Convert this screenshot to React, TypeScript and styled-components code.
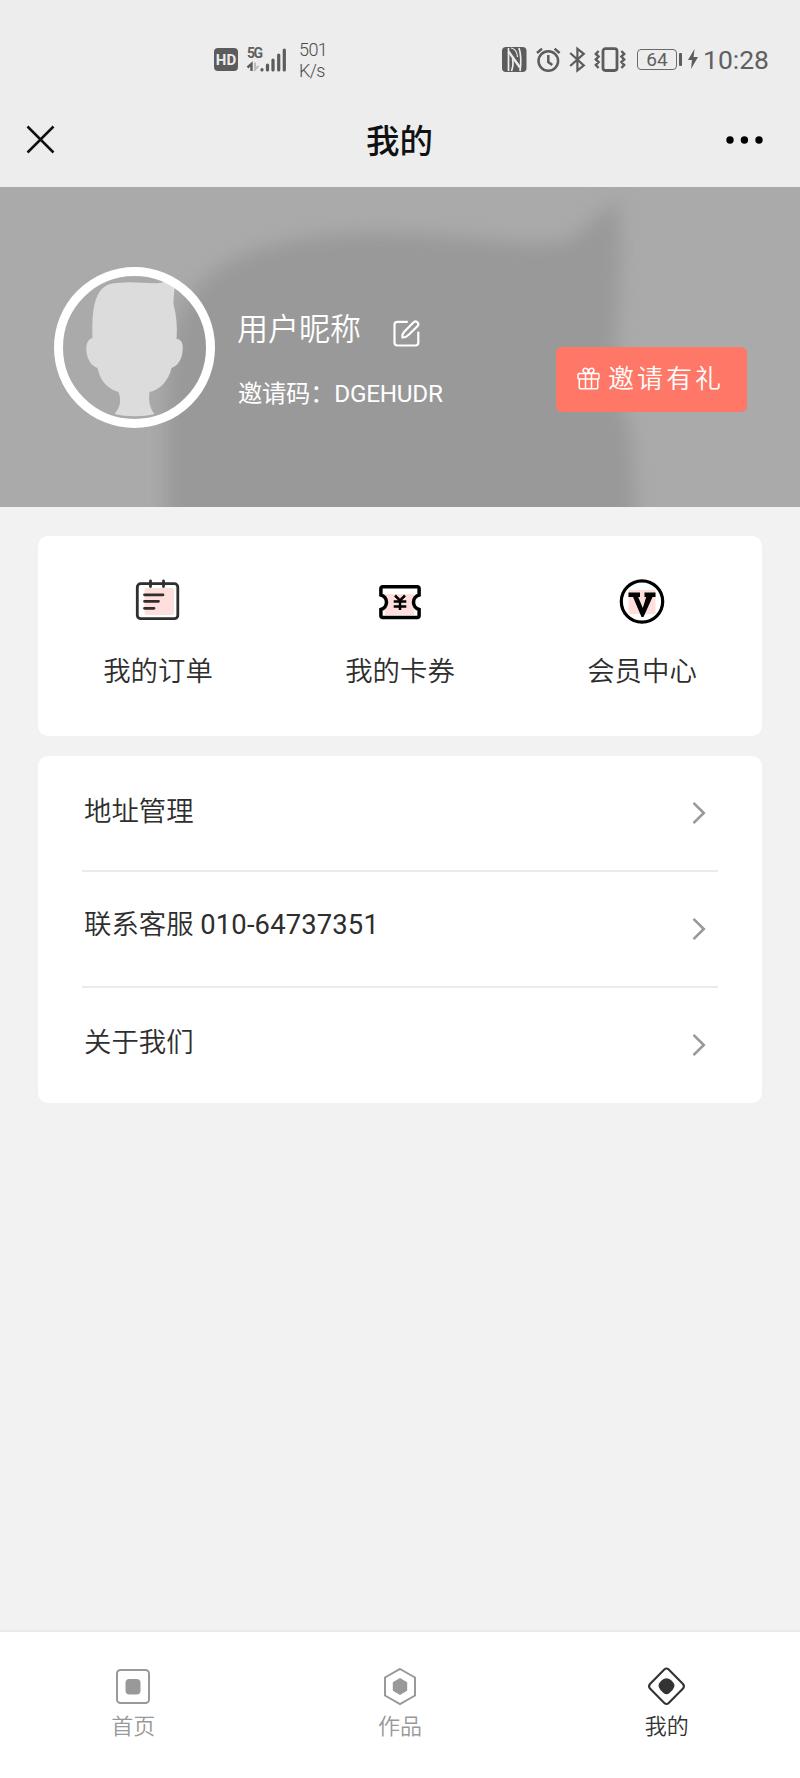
import React from "react";
import styled, { createGlobalStyle } from "styled-components";

const GlobalStyle = createGlobalStyle`
  * { box-sizing: border-box; }
  body {
    margin: 0;
    background: #f2f2f2;
    font-family: Roboto, "Noto Sans CJK SC", sans-serif;
    color: #2e2e2e;
  }
  svg { display: block; flex: none; overflow: visible; }
`;

const Page = styled.div`
  width: 800px;
  height: 1778px;
  display: flex;
  flex-direction: column;
  background: #f2f2f2;
  overflow: hidden;
`;

const StatusBar = styled.div`
  height: 93px;
  padding: 25px 31px 0 214px;
  background: #ededed;
  color: #606060;
  display: flex;
  justify-content: space-between;
  align-items: center;
`;

const StatusGroup = styled.div`
  display: flex;
  align-items: center;
`;

const HdBadge = styled.span`
  width: 24px;
  height: 23px;
  margin-right: 9px;
  border-radius: 4px;
  background: #5c5c5c;
  color: #ededed;
  font-size: 15px;
  font-weight: 700;
  line-height: 24px;
  text-align: center;
`;

const Signal = styled.div`
  display: flex;
  align-items: flex-end;
  width: 39px;
  height: 25px;
  margin-right: 13px;
`;

const Network = styled.div`
  width: 13px;
  height: 25px;
  font-size: 14px;
  font-weight: 700;
  line-height: 12px;
  letter-spacing: -1.5px;
`;

const Speed = styled.div`
  font-size: 18px;
  line-height: 21px;
  letter-spacing: -0.6px;
  font-weight: 300;
  color: #4c4c4c;
  padding-top: 1px;
`;

const Battery = styled.span`
  width: 40px;
  height: 21px;
  margin-left: 11px;
  border: 1.5px solid #6a6a6a;
  border-radius: 4px;
  font-size: 19px;
  font-weight: 400;
  line-height: 19px;
  text-align: center;
`;

const BatteryTip = styled.span`
  width: 3px;
  height: 13px;
  margin: 0 6px 0 2px;
  border-radius: 1px;
  background: #5c5c5c;
`;

const Clock = styled.span`
  margin-left: 5px;
  padding-top: 1px;
  font-size: 26.5px;
  font-weight: 400;
  line-height: 30px;
`;

const NavBar = styled.header`
  height: 94px;
  padding: 0 37px 1px 26px;
  background: #ededed;
  display: grid;
  grid-template-columns: 1fr auto 1fr;
  align-items: center;
  & > svg:last-child { justify-self: end; }
`;

const NavTitle = styled.h1`
  margin: 4px 0 0 10px;
  font-size: 33.5px;
  line-height: 40px;
  font-weight: 500;
  color: #111;
`;

const Hero = styled.section`
  position: relative;
  height: 320px;
  background: #aaa;
  overflow: hidden;
  display: flex;
`;

const Backdrop = styled.svg`
  position: absolute;
  inset: 0;
  filter: blur(9px);
`;

const HeroContent = styled.div`
  position: relative;
  width: 100%;
  display: flex;
  align-items: flex-start;
  padding: 80px 53px 0;
`;

const Identity = styled.div`
  margin-left: 21px;
  padding-top: 43px;
  color: #fff;
`;

const NameRow = styled.div`
  display: flex;
  align-items: center;
  gap: 32px;
  font-size: 31px;
  line-height: 40px;
  font-weight: 350;
  & > svg { margin-top: 7px; }
`;

const InviteCode = styled.div`
  margin-top: 29px;
  padding-left: 1px;
  font-size: 24.3px;
  line-height: 30px;
  letter-spacing: -0.25px;
`;

const InviteButton = styled.button`
  width: 191px;
  height: 65px;
  margin: 80px 0 0 auto;
  padding: 0 0 2px 21px;
  border: 0;
  border-radius: 6px;
  background: #ff7766;
  color: #fff;
  font: 350 26px/36px Roboto, "Noto Sans CJK SC", sans-serif;
  letter-spacing: 3px;
  display: flex;
  align-items: center;
  gap: 8px;
  white-space: nowrap;
`;

const Card = styled.section`
  margin: 0 38px;
  border-radius: 10px;
  background: #fff;
`;

const Services = styled(Card)`
  height: 200px;
  margin-top: 29px;
  display: grid;
  grid-template-columns: repeat(3, 242px);
  justify-content: center;
`;

const Service = styled.div`
  display: flex;
  flex-direction: column;
  align-items: center;
  padding-top: 42px;
  font-size: 27.4px;
  font-weight: 350;
  line-height: 40px;
  & > svg { margin-bottom: 30px; }
`;

const Menu = styled(Card)`
  margin-top: 20px;
  height: 347px;
  padding: 0 44px;
`;

const MenuRow = styled.div<{ $height: number; $lift: number }>`
  height: ${(p) => p.$height}px;
  padding: 0 13px 0 2px;
  display: flex;
  justify-content: space-between;
  align-items: center;
  font-size: 27.4px;
  font-weight: 350;
  line-height: 40px;
  & + & { border-top: 2px solid #ebebeb; }
  & > span { margin-bottom: ${(p) => p.$lift}px; }
`;

const Phone = styled.b`
  font-weight: 400;
  letter-spacing: 0.15px;
`;

const TabBar = styled.nav`
  height: 148px;
  margin-top: auto;
  border-top: 2px solid #e9e9e9;
  background: #fff;
  display: grid;
  grid-template-columns: repeat(3, 1fr);
`;

const Tab = styled.div<{ $active?: boolean }>`
  display: flex;
  flex-direction: column;
  align-items: center;
  padding-top: 34px;
  font-size: 22px;
  font-weight: 350;
  line-height: 30px;
  color: ${(p) => (p.$active ? "#333" : "#999")};
  & > svg { margin-bottom: 6px; }
`;

const Avatar = () => (
  <svg width="163" height="161" viewBox="0 0 162 161">
    <defs>
      <clipPath id="face"><circle cx="81" cy="80.5" r="73.5" /></clipPath>
    </defs>
    <path
      clipPath="url(#face)"
      fill="#dcdcdc"
      d="M39 71 C38 38 42 16 64 16 C80 14 94 17 106 16 C113 15 119 12 124 7 C121 19 120 30 120 37 C123 49 124 60 123 72 C129 72 130 79 129 85 C128 93 124 99 118 101 C115 114 106 123 96 125 C95 134 96 141 101 147 C90 150 73 150 61 147 C67 140 68 133 65 125 C55 122 47 115 44 101 C38 99 34 93 33 85 C32 78 34 72 39 71 Z"
    />
    <circle cx="81" cy="80.5" r="76" fill="none" stroke="#fff" strokeWidth="9" />
  </svg>
);

const NfcIcon = () => (
  <svg width="25" height="25" viewBox="0 0 25 25">
    <rect width="24.5" height="25" rx="4" fill="#5c5c5c" />
    <g fill="none" stroke="#ededed" strokeWidth="1.7">
      <path d="M6.500 1V24" />
      <path d="M6.500 4.500L18 20.500" strokeWidth="2.400" />
      <path d="M10.500 12C11.500 16 11 20 9.500 24" />
      <path d="M9 1C13 1.500 15 4 15.500 10" strokeWidth="1.200" />
      <path d="M18 24C19.200 16 19.200 8 17 1" />
    </g>
  </svg>
);

const AlarmIcon = styled.svg`
  margin-left: 9px;
`;

const BluetoothIcon = styled.svg`
  margin-left: 8px;
`;

const VibrateIcon = styled.svg`
  margin-left: 8px;
`;

const BoltIcon = () => (
  <svg width="10" height="20" viewBox="0 0 10 20" fill="#5c5c5c">
    <path d="M6.5 0L0 11h4L3 20l7-12H5.6z" />
  </svg>
);

const EditIcon = () => (
  <svg width="27" height="27" viewBox="0 0 27 27" fill="none" stroke="#fff" strokeWidth="2.2" strokeLinecap="round">
    <path d="M14 1.8H4.5A3 3 0 0 0 1.5 4.8V22.5a3 3 0 0 0 3 3H22.3a3 3 0 0 0 3-3V12.5" />
    <path d="M9.5 17.5c-.5-2 .2-4 2-6L20.4 2.500a2.700 2.700 0 0 1 4.200 3.500L16 14.500c-2 2-4 3.200-6.500 3z" />
  </svg>
);

const GiftIcon = () => (
  <svg width="23" height="23" viewBox="0 0 23 23" fill="none" stroke="#fff" strokeWidth="1.5">
    <rect x="1" y="6.5" width="21" height="5.5" rx="1" />
    <path d="M2.300 12v8.800a1 1 0 0 0 1 1H19.700a1 1 0 0 0 1-1V12M8.500 6.500v15M14.500 6.500v15" />
    <ellipse cx="8.800" cy="3.800" rx="2.800" ry="2.300" transform="rotate(35 8.800 3.800)" />
    <ellipse cx="14.200" cy="3.800" rx="2.800" ry="2.300" transform="rotate(-35 14.200 3.800)" />
  </svg>
);

const OrderIcon = () => (
  <svg width="44" height="44" viewBox="0.5 0 44 44" fill="none" stroke="#2f2f2f" strokeWidth="2.8" strokeLinecap="round">
    <rect x="9" y="10" width="29.500" height="27" rx="2" fill="#ffdfdb" stroke="none" />
    <rect x="1.800" y="5.700" width="40.500" height="35" rx="3.500" />
    <path d="M15 3v5.500M28 3v5.500M9 16.800h18.500M9 23.300h14M9 30.300h9.500" />
  </svg>
);

const CouponIcon = () => (
  <svg width="44" height="44" viewBox="0 0 44 44" fill="none" stroke="#000" strokeWidth="3.500">
    <rect x="7" y="16" width="29" height="21" fill="#ffdfdb" stroke="none" />
    <path fill="#fff" stroke="none" d="M2 16.500a8 8 0 0 1 0 16zM42 16.500a8 8 0 0 0 0 16z" />
    <path d="M4.500 8.800H39.500a1.600 1.600 0 0 1 1.600 1.600V17a7.500 7.500 0 0 0 0 14.500V38a1.600 1.600 0 0 1-1.600 1.600H4.500a1.600 1.600 0 0 1-1.600-1.600V31.500a7.500 7.500 0 0 0 0-14.500V10.400A1.600 1.600 0 0 1 4.500 8.800z" />
    <path strokeWidth="2.500" d="M17 17.500l5 5 5-5M15.700 23.500h12.600M15.700 28.500h12.600M22 22.500v9.500" />
  </svg>
);

const MemberIcon = () => (
  <svg width="44" height="44" viewBox="0 -1 44 44">
    <rect x="8.500" y="11" width="27" height="24" fill="#ffdfdb" />
    <circle cx="22" cy="22.500" r="20.700" fill="none" stroke="#000" strokeWidth="3.200" />
    <path d="M8.500 13.500H20v4.500h-1.800L22.800 29l3.400-11H24.500v-4.500h11v4.500h-3L23.500 38h-2L13 18H8.500z" />
  </svg>
);

const Chevron = () => (
  <svg width="13" height="22" viewBox="-0.5 0 13 22" fill="none" stroke="#999" strokeWidth="2.600">
    <path d="M1 .8L11.300 11 1 21.200" />
  </svg>
);

const HomeTabIcon = () => (
  <svg width="38" height="40" viewBox="0 0 38 40">
    <rect x="3" y="4" width="32" height="33" rx="3.500" fill="none" stroke="#999" strokeWidth="2" />
    <rect x="11.500" y="13" width="15" height="15.500" rx="4" fill="#999" />
  </svg>
);

const WorksTabIcon = () => (
  <svg width="38" height="40" viewBox="0 0 38 40">
    <path d="M19 3L34 11.500V29.500L19 38 4 29.500V11.500z" fill="none" stroke="#999" strokeWidth="2" />
    <path d="M19 12l7.200 4.200v8.600L19 29l-7.200-4.200v-8.600z" fill="#999" />
  </svg>
);

const MineTabIcon = () => (
  <svg width="38" height="40" viewBox="0.5 0 38 40">
    <path d="M16.800 3.500Q19 1.500 21.200 3.500L35.500 18Q37.400 20.300 35.500 22.500L21.200 37Q19 39 16.800 37L2.500 22.500Q.6 20.300 2.500 18z" fill="none" stroke="#333" strokeWidth="2.100" />
    <path d="M14.500 14Q19 10.500 23.500 14Q28 18 26.700 21Q25.500 24.500 22 27Q19 29.500 16 27Q12.500 24.500 11.300 21Q10 18 14.500 14z" fill="#333" />
  </svg>
);

export default function App() {
  return (
    <Page>
      <GlobalStyle />
      <StatusBar>
        <StatusGroup>
          <HdBadge>HD</HdBadge>
          <Signal>
            <Network>5G</Network>
            <svg width="26" height="25" viewBox="0 0 26 25" fill="none" stroke="#5c5c5c" strokeWidth="3.2" strokeLinecap="round">
              <path strokeWidth="2.400" strokeLinecap="butt" d="M-8.500 24V17L-12.500 20.500" />
              <path stroke="#bdbdbd" strokeWidth="2" strokeLinecap="butt" d="M-5 15.500V22.500L-1.500 19" />
              <path d="M2 22.500v.5M7.500 18v5M13 13v10M18.700 8v15M24.300 3v20" />
            </svg>
          </Signal>
          <Speed>501<br />K/s</Speed>
        </StatusGroup>
        <StatusGroup>
          <NfcIcon />
          <AlarmIcon width="25" height="25" viewBox="0 0 25 25" fill="none" stroke="#5c5c5c" strokeWidth="2.5">
            <circle cx="12.300" cy="14" r="9.800" />
            <path d="M12.300 8v7l4 3M1 6l5-4.400M23.600 6l-5-4.400" />
          </AlarmIcon>
          <BluetoothIcon width="17" height="25" viewBox="0 0 17 25" fill="none" stroke="#5c5c5c" strokeWidth="2.2">
            <path d="M1.200 6l13.600 12.400L8.400 23.500V1.800l6.400 5L1.200 19" />
          </BluetoothIcon>
          <VibrateIcon width="32" height="25" viewBox="0 0 32 25" fill="none" stroke="#5c5c5c" strokeWidth="2.4">
            <rect x="9" y="1.700" width="14" height="21.800" rx="2.400" strokeWidth="2.800" />
            <path d="M4.600 4L1.800 7l2.800 2.500-2.800 3 2.800 2.500-2.800 3 2.800 3M27.400 4l2.800 3-2.800 2.500 2.800 3-2.800 2.500 2.800 3-2.800 3" />
          </VibrateIcon>
          <Battery>64</Battery>
          <BatteryTip />
          <BoltIcon />
          <Clock>10:28</Clock>
        </StatusGroup>
      </StatusBar>
      <NavBar>
        <svg width="29" height="29" viewBox="0 0 29 29" stroke="#111" strokeWidth="2.5">
          <path d="M1.500 1.500l26 26M27.500 1.500l-26 26" />
        </svg>
        <NavTitle>我的</NavTitle>
        <svg width="37" height="8" viewBox="0 0 37 8" fill="#000">
          <circle cx="4" cy="4" r="3.700" />
          <circle cx="18.400" cy="4" r="3.700" />
          <circle cx="33" cy="4" r="3.700" />
        </svg>
      </NavBar>
      <Hero>
        <Backdrop width="800" height="320" viewBox="0 0 800 320" fill="#999">
          <path d="M166 350V230C166 160 180 105 215 84C255 55 320 46 380 46C450 46 505 58 550 56C582 55 592 28 618 14C621 50 621 80 616 150C614 200 626 220 632 260L637 350Z" />
        </Backdrop>
        <HeroContent>
          <Avatar />
          <Identity>
            <NameRow>用户昵称<EditIcon /></NameRow>
            <InviteCode>邀请码：DGEHUDR</InviteCode>
          </Identity>
          <InviteButton><GiftIcon />邀请有礼</InviteButton>
        </HeroContent>
      </Hero>
      <Services>
        <Service><OrderIcon />我的订单</Service>
        <Service><CouponIcon />我的卡券</Service>
        <Service><MemberIcon />会员中心</Service>
      </Services>
      <Menu>
        <MenuRow $height={114} $lift={3}><span>地址管理</span><Chevron /></MenuRow>
        <MenuRow $height={116} $lift={8}><span>联系客服 <Phone>010-64737351</Phone></span><Chevron /></MenuRow>
        <MenuRow $height={116} $lift={5}><span>关于我们</span><Chevron /></MenuRow>
      </Menu>
      <TabBar>
        <Tab><HomeTabIcon />首页</Tab>
        <Tab><WorksTabIcon />作品</Tab>
        <Tab $active><MineTabIcon />我的</Tab>
      </TabBar>
    </Page>
  );
}
